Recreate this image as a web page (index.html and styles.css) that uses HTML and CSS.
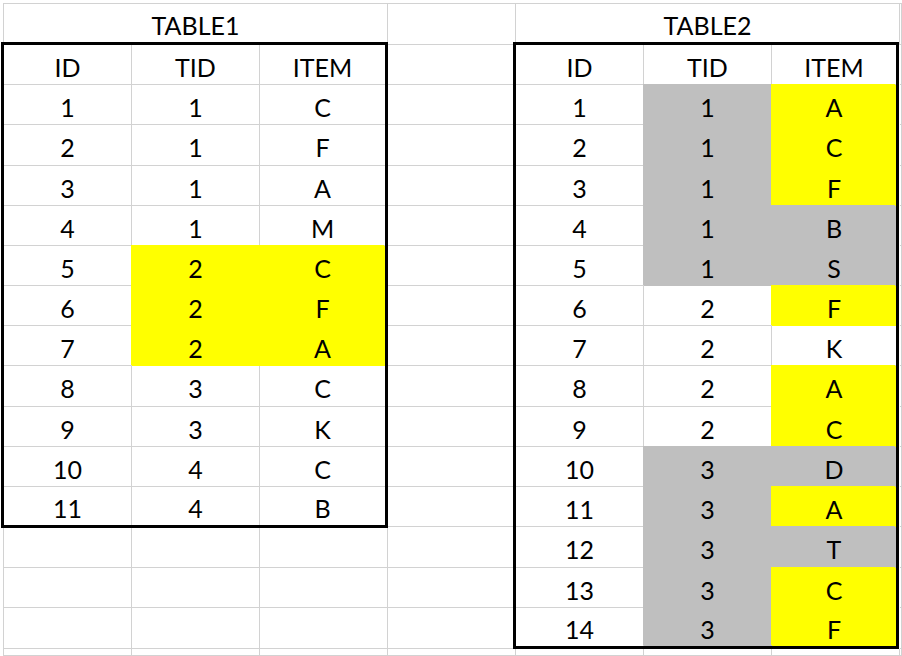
FILE: index.html
```html
<!DOCTYPE html>
<html>
<head>
<meta charset="utf-8">
<link rel="stylesheet" href="styles.css">
</head>
<body>
<div class="sheet">
  <div class="c"></div><div class="c"></div><div class="c"></div><div class="c"></div><div class="c"></div><div class="c"></div><div class="c"></div><div class="c"></div><div class="c"></div><div class="c"></div>
  <div class="c"></div><div class="c"></div><div class="c"></div><div class="c"></div><div class="c"></div><div class="c"></div><div class="c"></div><div class="c"></div><div class="c"></div><div class="c"></div>
  <div class="c"></div><div class="c"></div><div class="c"></div><div class="c"></div><div class="c"></div><div class="c"></div><div class="c"></div><div class="c"></div><div class="c"></div><div class="c"></div>
  <div class="c"></div><div class="c"></div><div class="c"></div><div class="c"></div><div class="c"></div><div class="c"></div><div class="c"></div><div class="c"></div><div class="c"></div><div class="c"></div>
  <div class="c"></div><div class="c"></div><div class="c"></div><div class="c"></div><div class="c"></div><div class="c"></div><div class="c"></div><div class="c"></div><div class="c"></div>

  <div class="title title1">TABLE1</div>
  <div class="title title2">TABLE2</div>

  <div class="tbl t1">
    <div class="tc">ID</div><div class="tc">TID</div><div class="tc">ITEM</div>
    <div class="tc">1</div><div class="tc">1</div><div class="tc">C</div>
    <div class="tc">2</div><div class="tc">1</div><div class="tc">F</div>
    <div class="tc">3</div><div class="tc">1</div><div class="tc">A</div>
    <div class="tc">4</div><div class="tc">1</div><div class="tc">M</div>
    <div class="tc">5</div><div class="tc y">2</div><div class="tc y">C</div>
    <div class="tc">6</div><div class="tc y">2</div><div class="tc y">F</div>
    <div class="tc">7</div><div class="tc y">2</div><div class="tc y">A</div>
    <div class="tc">8</div><div class="tc">3</div><div class="tc">C</div>
    <div class="tc">9</div><div class="tc">3</div><div class="tc">K</div>
    <div class="tc">10</div><div class="tc">4</div><div class="tc">C</div>
    <div class="tc lr">11</div><div class="tc lr">4</div><div class="tc lr">B</div>
  </div>

  <div class="tbl t2">
    <div class="tc">ID</div><div class="tc">TID</div><div class="tc">ITEM</div>
    <div class="tc">1</div><div class="tc g">1</div><div class="tc y">A</div>
    <div class="tc">2</div><div class="tc g">1</div><div class="tc y">C</div>
    <div class="tc">3</div><div class="tc g">1</div><div class="tc y">F</div>
    <div class="tc">4</div><div class="tc g">1</div><div class="tc g">B</div>
    <div class="tc">5</div><div class="tc g">1</div><div class="tc g">S</div>
    <div class="tc">6</div><div class="tc">2</div><div class="tc y">F</div>
    <div class="tc">7</div><div class="tc">2</div><div class="tc">K</div>
    <div class="tc">8</div><div class="tc">2</div><div class="tc y">A</div>
    <div class="tc">9</div><div class="tc">2</div><div class="tc y">C</div>
    <div class="tc">10</div><div class="tc g">3</div><div class="tc g">D</div>
    <div class="tc">11</div><div class="tc g">3</div><div class="tc y">A</div>
    <div class="tc">12</div><div class="tc g">3</div><div class="tc g">T</div>
    <div class="tc">13</div><div class="tc g">3</div><div class="tc y">C</div>
    <div class="tc lr">14</div><div class="tc g lr">3</div><div class="tc y lr">F</div>
  </div>
</div>
</body>
</html>
```

FILE: styles.css
```css
html, body {
  margin: 0;
  padding: 0;
  background: #ffffff;
  overflow: hidden;
}

body {
  font-family: Lato, "Open Sans", sans-serif;
  font-size: 25px;
  color: #000000;
}

.sheet {
  display: grid;
  grid-template-columns: repeat(7, 128px) 2px;
  grid-template-rows: 41px 40px 40px 41px 40px 40px 40px 40px 40px 41px 40px 40px 40px 41px 40px 41px 7px;
  margin: 3px 0 0 3px;
  border-top: 1px solid #d2d2d2;
  border-left: 1px solid #d2d2d2;
}

.c,
.title {
  box-sizing: border-box;
  border-right: 1px solid #d2d2d2;
  border-bottom: 1px solid #d2d2d2;
}

.title {
  grid-row: 1;
  display: flex;
  align-items: center;
  justify-content: center;
  padding-top: 2px;
}

.title1 { grid-column: 1 / span 3; }
.title2 { grid-column: 5 / span 3; }

.tbl {
  display: grid;
  border: 3px solid #000000;
  background: #ffffff;
}

.t1 {
  grid-column: 1 / span 3;
  grid-row: 2 / span 12;
  margin: -3px 0 -1px -3px;
  grid-template-columns: 128px 128px 125px;
  grid-template-rows: 40px 40px 41px 40px 40px 40px 40px 40px 41px 40px 40px 38px;
}

.t2 {
  grid-column: 5 / span 3;
  grid-row: 2 / span 15;
  margin: -3px 1px 0 -3px;
  grid-template-columns: 128px 128px 124px;
  grid-template-rows: 40px 40px 41px 40px 40px 40px 40px 40px 41px 40px 40px 40px 41px 40px 38px;
}

.tc {
  box-sizing: border-box;
  display: flex;
  align-items: center;
  justify-content: center;
  padding-top: 4px;
  border-right: 1px solid #d2d2d2;
  border-bottom: 1px solid #d2d2d2;
}

.tc:nth-child(3n) {
  border-right: none;
}

.tc.lr {
  border-bottom: none;
}

.tc.y {
  background: #ffff00;
  border-color: #ffff00;
  box-shadow: -1px -1px 0 0 #ffff00;
}

.tc.g {
  background: #bfbfbf;
  border-color: #bfbfbf;
  box-shadow: -1px -1px 0 0 #bfbfbf;
}
```
